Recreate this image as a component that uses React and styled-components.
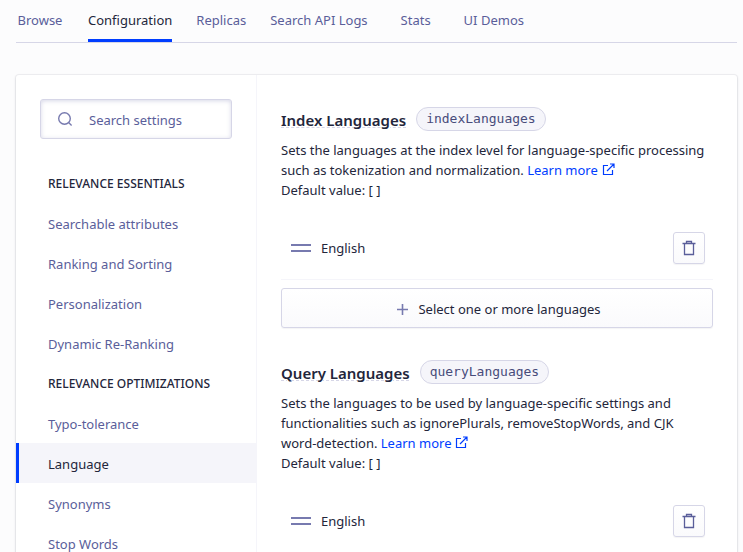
import styled, { createGlobalStyle } from "styled-components";

const GlobalStyle = createGlobalStyle`
  :root {
    --page: #fcfcfd;
    --ink: #23263b;
    --muted: #5a5e9a;
    --icon: #777aaf;
    --line: #d6d6e7;
    --soft: #f5f5fa;
    --blue: #003dff;
  }
  * {
    box-sizing: border-box;
  }
  body {
    margin: 0;
    height: 100vh;
    overflow: hidden;
    background: var(--page);
    color: var(--ink);
    font-family: "Noto Sans", "Segoe UI", sans-serif;
    font-size: 13px;
    line-height: 20px;
  }
  button, input {
    font: inherit;
    color: inherit;
  }
  a {
    text-decoration: none;
  }
`;

const Page = styled.div`
  padding: 0 6px 0 16px;
`;

const Tabs = styled.nav`
  display: flex;
  gap: 24px;
  height: 43px;
  border-bottom: 1px solid var(--line);
`;

const Tab = styled.a`
  min-width: 48px;
  padding-top: 10px;
  text-align: center;
  white-space: nowrap;
  color: ${(p) => (p.$active ? "var(--ink)" : "var(--muted)")};
  border-bottom: 3px solid ${(p) => (p.$active ? "var(--blue)" : "transparent")};
`;

const Card = styled.main`
  display: flex;
  margin-top: 32px;
  background: #fff;
  border-radius: 3px;
  box-shadow: 0 0 0 1px rgba(35, 38, 59, 0.05), 0 1px 3px rgba(35, 38, 59, 0.15);
`;

const Sidebar = styled.aside`
  flex: 0 0 241px;
  padding: 24px 0;
  border-right: 1px solid var(--soft);
`;

const SearchBox = styled.label`
  display: flex;
  align-items: center;
  gap: 16px;
  height: 40px;
  margin: 0 24px 24px;
  padding: 0 16px;
  border: 1px solid var(--line);
  border-radius: 3px;
  box-shadow: inset 0 1px 4px rgba(119, 122, 175, 0.3);
  svg {
    flex: none;
    color: var(--icon);
  }
`;

const SearchInput = styled.input`
  width: 100%;
  min-width: 0;
  padding: 2px 0 0;
  border: 0;
  outline: 0;
  background: none;
  &::placeholder {
    color: var(--muted);
    opacity: 1;
  }
`;

const GroupTitle = styled.h3`
  height: 40px;
  margin: 0;
  padding: 1px 32px 0;
  font-size: 12px;
  font-weight: 500;
  line-height: 40px;
  text-transform: uppercase;
  white-space: nowrap;
`;

const MenuLink = styled.a`
  display: block;
  height: 40px;
  padding: 1px 29px 0;
  line-height: 40px;
  border-left: 3px solid ${(p) => (p.$active ? "var(--blue)" : "transparent")};
  background: ${(p) => (p.$active ? "var(--soft)" : "none")};
  color: ${(p) => (p.$active ? "var(--ink)" : "var(--muted)")};
`;

const Content = styled.div`
  flex: 1;
  min-width: 0;
  padding: 32px 24px;
`;

const Section = styled.section`
  margin-bottom: 32px;
`;

const SectionHead = styled.div`
  display: flex;
  align-items: center;
  gap: 10px;
  margin-bottom: 9px;
`;

const Title = styled.h2`
  margin: 0;
  padding-top: 2px;
  font-size: 15px;
  font-weight: 600;
  line-height: 20px;
  text-decoration: underline dashed var(--line) 1px;
  text-underline-offset: 1px;
`;

const Badge = styled.code`
  padding: 0 9px;
  border: 1px solid var(--line);
  border-radius: 12px;
  background: var(--soft);
  color: #484c7a;
  font-family: "DejaVu Sans Mono", monospace;
  font-size: 13px;
  line-height: 22px;
`;

const Description = styled.p`
  margin: 0;
`;

const NoWrap = styled.span`
  white-space: nowrap;
`;

const LearnMore = styled.a`
  color: var(--blue);
  white-space: nowrap;
  svg {
    margin-left: 4px;
    vertical-align: -1px;
  }
`;

const LanguageRow = styled.div`
  display: flex;
  align-items: center;
  gap: 10px;
  margin-top: 17px;
  padding: 15px 8px 15px 10px;
  border-bottom: 1px solid var(--soft);
`;

const Handle = styled.span`
  width: 20px;
  height: 8px;
  border: solid var(--icon);
  border-width: 2px 0;
`;

const buttonFace = `
  display: flex;
  align-items: center;
  justify-content: center;
  border: 1px solid var(--line);
  border-radius: 3px;
  background: linear-gradient(#fff, #fafafc);
  box-shadow: 0 1px 1px rgba(35, 38, 59, 0.05);
`;

const IconButton = styled.button`
  ${buttonFace}
  width: 32px;
  height: 32px;
  margin-left: auto;
  padding: 0;
  color: var(--muted);
`;

const AddButton = styled.button`
  ${buttonFace}
  gap: 10px;
  width: 100%;
  height: 40px;
  margin-top: 8px;
  padding: 2px 0 0 4px;
  svg {
    color: var(--icon);
  }
`;

const SearchIcon = () => (
  <svg width="16" height="16" viewBox="0 0 16 16" fill="none" stroke="currentColor" strokeWidth="1.4">
    <circle cx="7.5" cy="7.5" r="5.8" />
    <path d="M11.6 11.6 14.6 14.4" />
  </svg>
);

const ExternalIcon = () => (
  <svg width="13" height="13" viewBox="0 0 13 13" fill="none" stroke="currentColor" strokeWidth="1.2">
    <path d="M6 2.5H1.5v9h9V7M8 1h4v4M12 1 5 8" />
  </svg>
);

const TrashIcon = () => (
  <svg width="14" height="16" viewBox="0 0 14 16" fill="none" stroke="currentColor" strokeWidth="1.3">
    <path d="M.5 3.5h13M4.5 3.5v-2h5v2" />
    <path d="M2.5 4v10.5h9V4" />
  </svg>
);

const PlusIcon = () => (
  <svg width="11" height="11" viewBox="0 0 11 11" fill="none" stroke="currentColor" strokeWidth="1.6">
    <path d="M5.5 0v11M0 5.5h11" />
  </svg>
);

const tabs = ["Browse", "Configuration", "Replicas", "Search API Logs", "Stats", "UI Demos"];

const menu = [
  {
    title: "Relevance essentials",
    items: ["Searchable attributes", "Ranking and Sorting", "Personalization", "Dynamic Re-Ranking"],
  },
  {
    title: "Relevance optimizations",
    items: ["Typo-tolerance", "Language", "Synonyms", "Stop Words"],
  },
];

const LanguageSetting = ({ title, name, children }) => {
  return (
    <Section>
      <SectionHead>
        <Title>{title}</Title>
        <Badge>{name}</Badge>
      </SectionHead>
      <Description>
        {children}{" "}
        <LearnMore href="#">
          Learn more
          <ExternalIcon />
        </LearnMore>
      </Description>
      <Description>Default value: [ ]</Description>
      <LanguageRow>
        <Handle />
        <span>English</span>
        <IconButton type="button" aria-label="Remove English">
          <TrashIcon />
        </IconButton>
      </LanguageRow>
      <AddButton type="button">
        <PlusIcon />
        Select one or more languages
      </AddButton>
    </Section>
  );
};

const App = () => {
  return (
    <Page>
      <GlobalStyle />
      <Tabs>
        {tabs.map((tab) => (
          <Tab key={tab} href="#" $active={tab === "Configuration"}>
            {tab}
          </Tab>
        ))}
      </Tabs>
      <Card>
        <Sidebar>
          <SearchBox>
            <SearchIcon />
            <SearchInput type="text" placeholder="Search settings" aria-label="Search settings" />
          </SearchBox>
          {menu.map((group) => (
            <div key={group.title}>
              <GroupTitle>{group.title}</GroupTitle>
              {group.items.map((item) => (
                <MenuLink key={item} href="#" $active={item === "Language"}>
                  {item}
                </MenuLink>
              ))}
            </div>
          ))}
        </Sidebar>
        <Content>
          <LanguageSetting title="Index Languages" name="indexLanguages">
            Sets the languages at the index level for language-specific processing such as
            tokenization and normalization.
          </LanguageSetting>
          <LanguageSetting title="Query Languages" name="queryLanguages">
            Sets the languages to be used by language-specific settings and functionalities such as
            ignorePlurals, removeStopWords, and CJK <NoWrap>word-detection.</NoWrap>
          </LanguageSetting>
        </Content>
      </Card>
    </Page>
  );
};

export default App;
